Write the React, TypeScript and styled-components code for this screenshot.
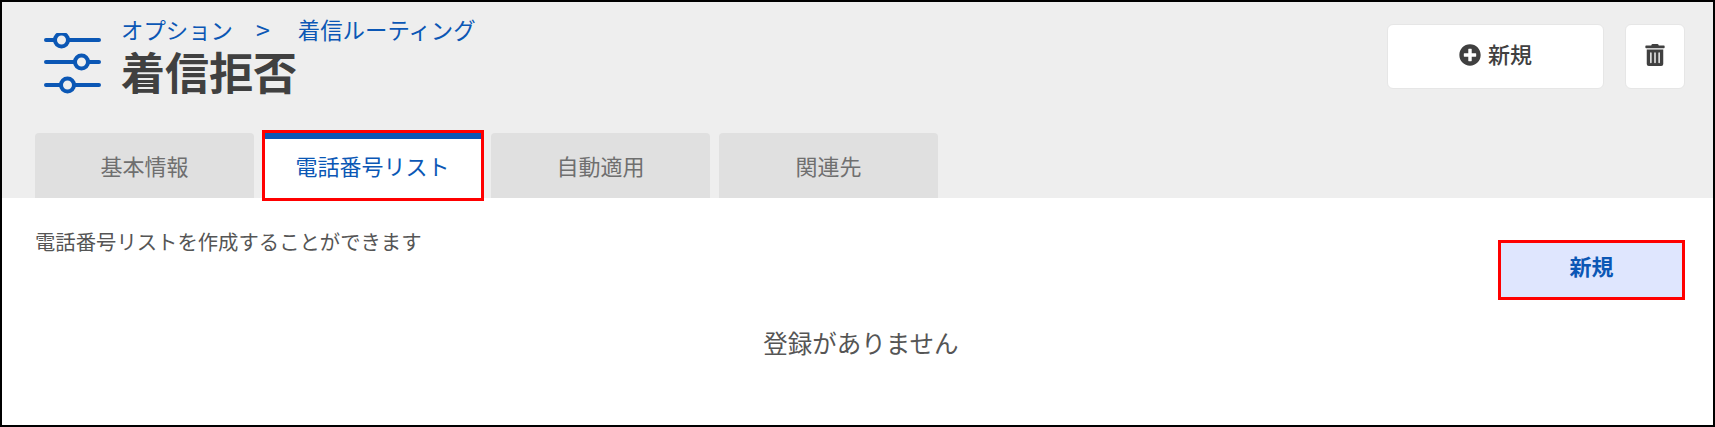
import React from "react";
import styled, { createGlobalStyle, css } from "styled-components";
import { FaPlusCircle, FaTrashAlt } from "react-icons/fa";

const Global = createGlobalStyle`
  html, body { margin: 0; padding: 0; background: #fff; }
  body { font-family: "Noto Sans CJK JP", "Liberation Sans", sans-serif; }
  * { box-sizing: border-box; }
`;

const Frame = styled.div`
  width: 1715px;
  height: 427px;
  border: 2px solid #000;
  display: flex;
  flex-direction: column;
  overflow: hidden;
  background: #fff;
`;

const Header = styled.header`
  height: 196px;
  flex: none;
  background: #eeeeee;
  padding: 0 28px 0 33px;
  display: flex;
  flex-direction: column;
  justify-content: space-between;
`;

const TopRow = styled.div`
  display: flex;
  justify-content: space-between;
  align-items: flex-start;
`;

const TitleBlock = styled.div`
  display: flex;
  align-items: flex-start;
  gap: 19px;
  padding: 16px 0 0 9px;
`;

const IconSlot = styled.div`
  padding-top: 15px;
`;

const TitleText = styled.div`
  display: flex;
  flex-direction: column;
`;

const Breadcrumb = styled.div`
  display: flex;
  gap: 23px;
  font-size: 22.4px;
  line-height: 28px;
  color: #0b57b5;
  margin-top: -3px;
`;

const Chevron = styled.span`
  font-size: 25px;
  margin-right: 5px;
`;

const Title = styled.h1`
  margin: 4px 0 0;
  font-size: 44px;
  line-height: 48px;
  font-weight: 700;
  color: #404040;
`;

const Actions = styled.div`
  display: flex;
  gap: 21px;
  padding-top: 22px;
`;

const ActionButton = styled.button<{ $wide?: boolean }>`
  width: ${(p) => (p.$wide ? "217px" : "60px")};
  height: 65px;
  background: #fff;
  border: 1px solid #e6e6e6;
  border-radius: 6px;
  font: inherit;
  font-size: 22px;
  font-weight: 500;
  color: #404040;
  display: flex;
  align-items: center;
  justify-content: center;
  gap: 7px;
  padding: 0 0 4px;
`;

const ActionLabel = styled.span`
  margin-bottom: 4px;
`;

const Tabs = styled.nav`
  display: flex;
  gap: 9px;
`;

const Tab = styled.div<{ $active?: boolean }>`
  width: 219px;
  height: 65px;
  padding-bottom: 2px;
  display: flex;
  align-items: center;
  justify-content: center;
  font-size: 22px;
  border-radius: 4px 4px 0 0;
  background: ${(p) => (p.$active ? "#fff" : "#e0e0e0")};
  color: ${(p) => (p.$active ? "#0b57b5" : "#6f6f6f")};
  ${(p) =>
    p.$active &&
    css`
      box-shadow: inset 0 6px 0 #0b57b5;
      border-radius: 0;
      position: relative;
      &::after {
        content: "";
        position: absolute;
        inset: -3px -2px -3px -1px;
        border: 3px solid #ff0000;
        pointer-events: none;
      }
    `}
`;

const Body = styled.main`
  flex: 1;
  padding: 26px 31px 0 33px;
  display: flex;
  flex-direction: column;
`;

const BodyTop = styled.div`
  display: flex;
  justify-content: space-between;
  align-items: flex-start;
`;

const Description = styled.p`
  margin: 3px 0 0;
  font-size: 20.35px;
  line-height: 28px;
  color: #555;
`;

const AddButton = styled.button`
  width: 181px;
  height: 54px;
  margin-top: 19px;
  background: #dfe6fe;
  border: none;
  font: inherit;
  font-size: 22px;
  font-weight: 700;
  color: #0b57b5;
  padding: 0 0 10px;
  position: relative;
  &::after {
    content: "";
    position: absolute;
    inset: -3px;
    border: 3px solid #ff0000;
    pointer-events: none;
  }
`;

const Empty = styled.div`
  margin-top: 28px;
  padding-left: 5px;
  text-align: center;
  font-size: 24.5px;
  line-height: 36px;
  color: #555;
`;

const SlidersIcon = () => (
  <svg width="58" height="66" viewBox="0 0 58 66" fill="none" stroke="#0b57b5" strokeWidth="4" strokeLinecap="round">
    <path d="M2 7H10M24 7H55" />
    <circle cx="17.5" cy="7" r="6.5" />
    <path d="M2 29H30M44 29H55" />
    <circle cx="37.5" cy="29" r="6.5" />
    <path d="M2 52H16M30 52H55" />
    <circle cx="23.5" cy="52" r="6.5" />
  </svg>
);

export default function App() {
  return (
    <>
      <Global />
      <Frame>
        <Header>
          <TopRow>
            <TitleBlock>
              <IconSlot>
                <SlidersIcon />
              </IconSlot>
              <TitleText>
                <Breadcrumb>
                  <span>オプション</span>
                  <Chevron>&gt;</Chevron>
                  <span>着信ルーティング</span>
                </Breadcrumb>
                <Title>着信拒否</Title>
              </TitleText>
            </TitleBlock>
            <Actions>
              <ActionButton $wide>
                <FaPlusCircle size={22} />
                <ActionLabel>新規</ActionLabel>
              </ActionButton>
              <ActionButton aria-label="削除">
                <FaTrashAlt size={22} />
              </ActionButton>
            </Actions>
          </TopRow>
          <Tabs>
            <Tab>基本情報</Tab>
            <Tab $active>電話番号リスト</Tab>
            <Tab>自動適用</Tab>
            <Tab>関連先</Tab>
          </Tabs>
        </Header>
        <Body>
          <BodyTop>
            <Description>電話番号リストを作成することができます</Description>
            <AddButton>新規</AddButton>
          </BodyTop>
          <Empty>登録がありません</Empty>
        </Body>
      </Frame>
    </>
  );
}
